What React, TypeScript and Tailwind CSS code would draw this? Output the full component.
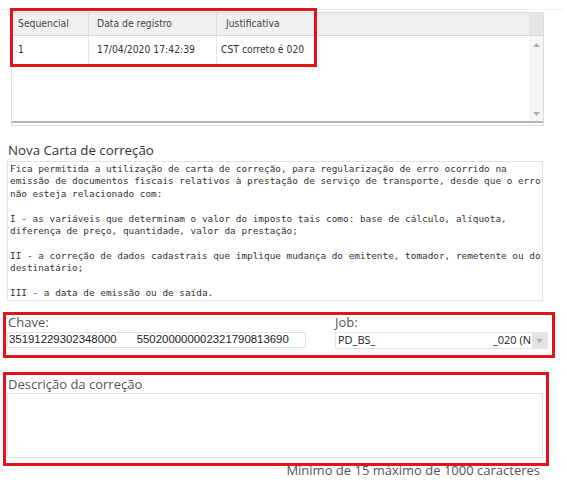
const carta = `Fica permitida a utilização de carta de correção, para regularização de erro ocorrido na
emissão de documentos fiscais relativos à prestação de serviço de transporte, desde que o erro
não esteja relacionado com:

I - as variáveis que determinam o valor do imposto tais como: base de cálculo, alíquota,
diferença de preço, quantidade, valor da prestação;

II - a correção de dados cadastrais que implique mudança do emitente, tomador, remetente ou do
destinatário;

III - a data de emissão ou de saída.`

const sans = "font-['Open_Sans',sans-serif]"
const grid = "font-['DejaVu_Sans_Condensed','DejaVu_Sans',sans-serif] [font-stretch:condensed]"

function Triangle({ up }: { up?: boolean }) {
  return (
    <svg width="7" height="4" viewBox="0 0 7 4">
      <path d={up ? 'M0 4 L3.5 0 L7 4 Z' : 'M0 0 L3.5 4 L7 0 Z'} fill="#b0b0b0" />
    </svg>
  )
}

function HistoryGrid() {
  return (
    <div className="ml-[11px] mt-[2px] w-[533px] border border-[#dcdcdc] bg-white">
      <div className={`flex h-[23px] border-b border-[#d8d8d8] bg-[#f0f0f0] text-[10.3px] text-[#444] ${grid}`}>
        <div className="flex w-[77px] items-center border-r border-[#dedede] pl-[6px]">Sequencial</div>
        <div className="flex w-[128px] items-center border-r border-[#dedede] pl-[8px]">Data de registro</div>
        <div className="flex flex-1 items-center pl-[9px]">Justificativa</div>
        <div className="w-[14px] bg-[#e5e5e5]" />
      </div>
      <div className="flex h-[85px]">
        <div className="flex-1">
          <div className={`flex h-[28px] text-[10.3px] text-[#333] ${grid}`}>
            <div className="flex w-[77px] items-center border-r border-[#e6e6e6] pl-[6px]">1</div>
            <div className="flex w-[128px] items-center border-r border-[#e6e6e6] pl-[8px]">17/04/2020 17:42:39</div>
            <div className="flex flex-1 items-center pl-[4px]">CST correto é 020</div>
          </div>
        </div>
        <div className="flex w-[14px] flex-col items-center justify-between bg-[#f6f6f6] pb-[5px] pt-[7px]">
          <Triangle up />
          <Triangle />
        </div>
      </div>
      <div className="h-[2px] bg-[#b4b4b4]" />
      <div className="h-[2px] bg-white" />
    </div>
  )
}

export default function App() {
  return (
    <div className="relative h-[486px] w-[567px] overflow-hidden bg-white text-[#333]">
      <div className="pt-[9px]">
        <div className="h-px w-[563px] bg-[#eeeeee]" />
      </div>

      <HistoryGrid />

      <h2 className={`ml-[8px] mt-[15px] text-[13.3px] leading-[19px] text-[#333] ${sans}`}>Nova Carta de correção</h2>
      <div className="ml-[7px] mt-[1px] h-[140px] w-[536px] overflow-hidden border border-[#e2e2e2] pl-[2px] pt-[1px]">
        <pre className="font-['DejaVu_Sans_Mono',monospace] text-[9.4px] leading-[12.4px] text-[#333]">{carta}</pre>
      </div>

      <div className="mt-[13px] flex">
        <div className="ml-[7px] w-[300px]">
          <div className={`pl-[1px] text-[13px] leading-[17px] text-[#555] ${sans}`}>Chave:</div>
          <div className="mt-[1px] flex h-[16px] w-[299px] items-center border border-[#e0e0e0] font-['Liberation_Sans',sans-serif] text-[11.4px] text-[#222]">
            <span className="pl-[1px]">35191229302348000</span>
            <span className="ml-[20px]">550200000002321790813690</span>
          </div>
        </div>
        <div className="ml-[28px] w-[213px]">
          <div className={`text-[13px] leading-[17px] text-[#555] ${sans}`}>Job:</div>
          <div className={`mt-[1px] flex h-[17px] w-[213px] items-center border border-[#e6e6e6] text-[11px] text-[#222] ${sans}`}>
            <span className="pl-[2px]">PD_BS_</span>
            <span className="ml-auto pr-[1px]">_020 (N</span>
            <div className="flex h-full w-[15px] items-center justify-center bg-[#e2e2e2]">
              <Triangle />
            </div>
          </div>
        </div>
      </div>

      <div className={`ml-[8px] mt-[28px] text-[13px] leading-[15px] text-[#555] ${sans}`}>Descrição da correção</div>
      <div className="ml-[7px] mt-[1px] h-[65px] w-[536px] border border-[#e2e2e2]" />
      <div className={`mt-[4px] w-[540px] text-right text-[13px] leading-[17px] text-[#555] ${sans}`}>
        Mínimo de 15 máximo de 1000 caracteres
      </div>

      <div className="pointer-events-none absolute left-[10px] top-[8px] h-[59px] w-[307px] border-[3px] border-[#e3131b]" />
      <div className="pointer-events-none absolute left-[3px] top-[312px] h-[46px] w-[552px] border-[3px] border-[#e3131b]" />
      <div className="pointer-events-none absolute left-[3px] top-[372px] h-[94px] w-[546px] border-[3px] border-[#e3131b]" />
    </div>
  )
}
